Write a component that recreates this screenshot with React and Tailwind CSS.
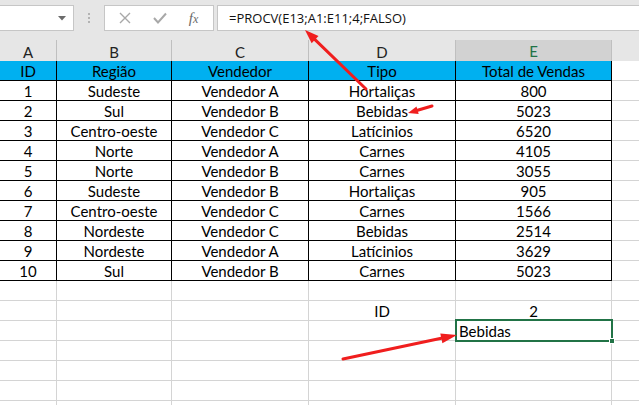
import React from "react";

const rows = [
  ["1", "Sudeste", "Vendedor A", "Hortaliças", "800"],
  ["2", "Sul", "Vendedor B", "Bebidas", "5023"],
  ["3", "Centro-oeste", "Vendedor C", "Latícinios", "6520"],
  ["4", "Norte", "Vendedor A", "Carnes", "4105"],
  ["5", "Norte", "Vendedor B", "Carnes", "3055"],
  ["6", "Sudeste", "Vendedor B", "Hortaliças", "905"],
  ["7", "Centro-oeste", "Vendedor C", "Carnes", "1566"],
  ["8", "Nordeste", "Vendedor C", "Bebidas", "2514"],
  ["9", "Nordeste", "Vendedor A", "Latícinios", "3629"],
  ["10", "Sul", "Vendedor B", "Carnes", "5023"],
];

const extra = [
  ["", "", "", "", ""],
  ["", "", "", "ID", "2"],
  ["", "", "", "", ""],
  ["", "", "", "", ""],
  ["", "", "", "", ""],
  ["", "", "", "", ""],
  ["", "", "", "", ""],
];

const cols = "grid grid-cols-[57px_115px_137px_147px_156px_1fr]";

function Toolbar() {
  return (
    <div className="h-[40px] bg-[#e6e6e6] flex items-start pt-[5px]">
      <div className="w-[74px] h-[26px] bg-white border border-l-0 border-[#c6c6c6] flex items-center justify-end pr-[7px]">
        <svg width="8" height="5" viewBox="0 0 8 5">
          <path d="M0 0 L8 0 L4 4.5 Z" fill="#6b6b6b" />
        </svg>
      </div>
      <div className="w-[30px] h-[26px] flex flex-col items-center justify-center gap-[2px]">
        <span className="w-[2px] h-[2px] bg-[#b3b3b3]" />
        <span className="w-[2px] h-[2px] bg-[#b3b3b3]" />
        <span className="w-[2px] h-[2px] bg-[#b3b3b3]" />
      </div>
      <div className="w-[110px] h-[26px] bg-white border border-[#c6c6c6] flex items-center">
        <div className="w-[37px] flex justify-center pl-[2px]">
          <svg width="12" height="12" viewBox="0 0 12 12">
            <path d="M1 1 L11 11 M11 1 L1 11" stroke="#a8a8a8" strokeWidth="1.4" />
          </svg>
        </div>
        <div className="w-[36px] flex justify-center">
          <svg width="14" height="12" viewBox="0 0 14 12">
            <path d="M1 6 L5 10.5 L13 1.5" stroke="#a8a8a8" strokeWidth="2" fill="none" />
          </svg>
        </div>
        <div className="flex-1 flex justify-center pr-[4px]">
          <span className="font-['Liberation_Serif',serif] italic text-[15px] text-[#6a6a6a] leading-none">
            f<span className="text-[12px]">x</span>
          </span>
        </div>
      </div>
      <div className="flex-1 ml-[3px] h-[26px] bg-white border border-r-0 border-[#c6c6c6] flex items-center pl-[11px]">
        <span className="font-['Open_Sans',sans-serif] text-[13px] text-[#111] leading-none">
          =PROCV(E13;A1:E11;4;FALSO)
        </span>
      </div>
    </div>
  );
}

function ColumnHeaders() {
  const letters = ["A", "B", "C", "D", "E", ""];
  return (
    <div className={`${cols} h-[21px]`}>
      {letters.map((l, i) =>
        i === 4 ? (
          <div
            key={i}
            className="bg-[#d2d2d2] border-r border-[#bfbfbf] border-b-2 border-b-[#217346] text-[#217346] flex items-center justify-center text-[15px]"
          >
            {l}
          </div>
        ) : (
          <div
            key={i}
            className={`bg-[#e6e6e6] border-b border-[#ababab] flex items-center justify-center text-[15px] text-[#222] ${
              i < 5 ? "border-r border-r-[#bfbfbf]" : ""
            }`}
          >
            {l}
          </div>
        )
      )}
    </div>
  );
}

function TableRow({ cells, head }) {
  return (
    <div className={`${cols} h-[20px]`}>
      {cells.map((c, i) => (
        <div
          key={i}
          className={`border-b border-black border-r flex items-center justify-center text-[15px] text-black leading-none pt-[2px] ${
            head ? "bg-[#00b0f0]" : "bg-white"
          }`}
        >
          {c}
        </div>
      ))}
      <div className="border-b border-[#d4d4d4] bg-white" />
    </div>
  );
}

function EmptyRow({ cells }) {
  return (
    <div className={`${cols} h-[20px]`}>
      {cells.map((c, i) => (
        <div
          key={i}
          className="border-b border-r border-[#d4d4d4] flex items-center justify-center text-[15px] text-black leading-none pt-[2px]"
        >
          {c}
        </div>
      ))}
      <div className="border-b border-[#d4d4d4]" />
    </div>
  );
}

function Arrows() {
  return (
    <svg className="absolute inset-0 pointer-events-none" width="639" height="405" viewBox="0 0 639 405">
      <g stroke="#f01e1e" strokeWidth="3" strokeLinecap="round" fill="#f01e1e">
        <line x1="366" y1="89" x2="315" y2="39.7" />
        <line x1="432" y1="106" x2="417.6" y2="110.2" />
        <line x1="343" y1="359" x2="441.3" y2="338.3" />
      </g>
      <g fill="#f01e1e">
        <polygon points="305,30 318.5,36.1 311.6,43.3" />
        <polygon points="408,113 416.5,106.4 418.7,114" />
        <polygon points="457,335 442.4,343.2 440.3,333.4" />
      </g>
    </svg>
  );
}

export default function App() {
  return (
    <div className="w-[639px] h-[405px] overflow-hidden relative bg-white font-['Lato',sans-serif]">
      <Toolbar />
      <ColumnHeaders />
      <TableRow cells={["ID", "Região", "Vendedor", "Tipo", "Total de Vendas"]} head />
      {rows.map((r, i) => (
        <TableRow key={i} cells={r} />
      ))}
      {extra.map((r, i) => (
        <EmptyRow key={i} cells={r} />
      ))}

      {/* selected cell E14 */}
      <div className="absolute left-[455px] top-[319px] w-[158px] h-[23px] border-2 border-[#217346] flex items-center pl-[2px] pt-[2px] text-[15px] leading-none text-black">
        Bebidas
      </div>
      <div className="absolute left-[609px] top-[338px] w-[6px] h-[6px] bg-[#217346] border border-white" />

      <Arrows />
    </div>
  );
}
